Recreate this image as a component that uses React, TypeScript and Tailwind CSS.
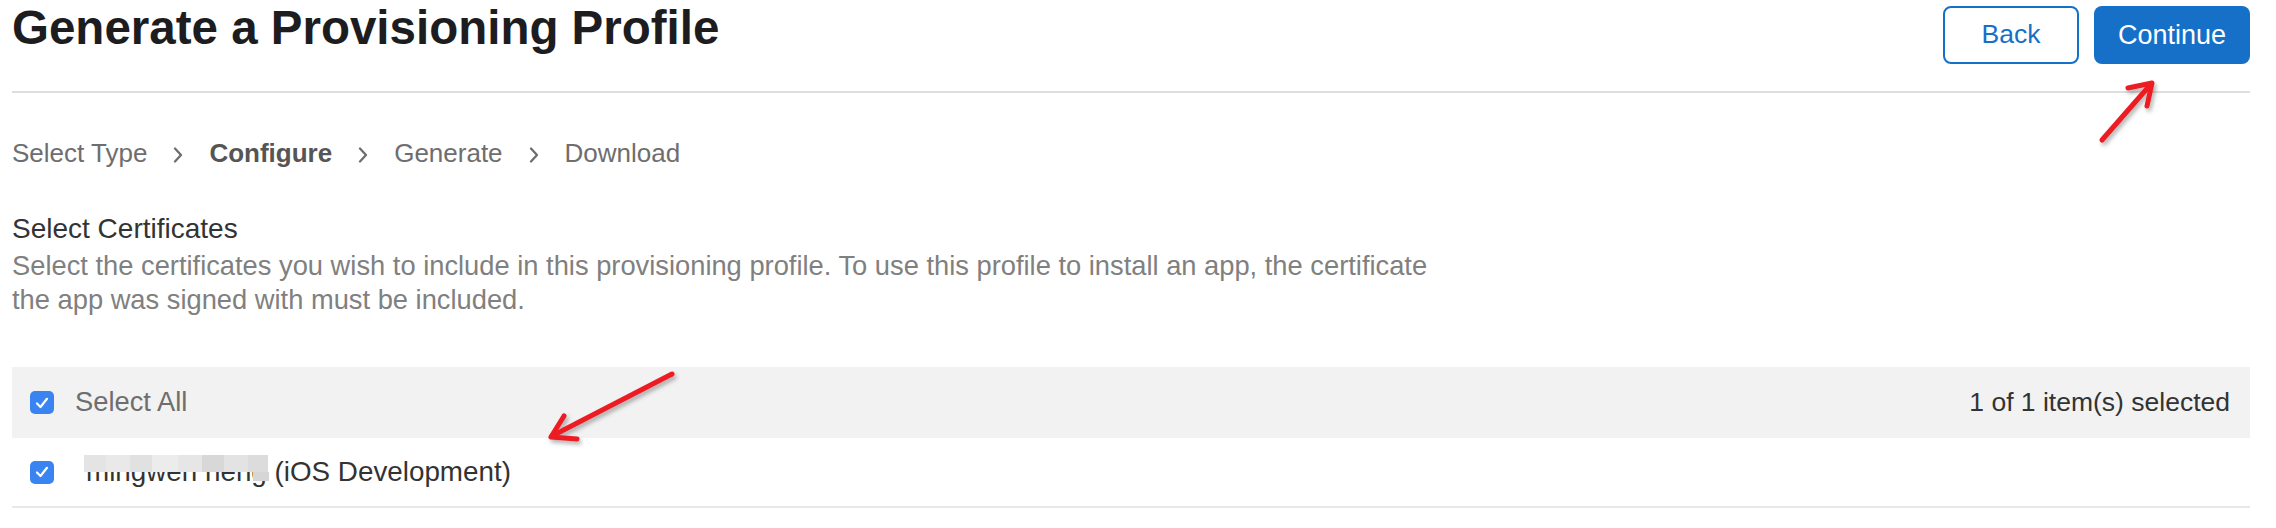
import React from "react";

// 選択済みチェックボックス
function Check() {
  return (
    <span className="flex h-[23px] w-[24px] shrink-0 items-center justify-center rounded-[5px] bg-[#3a84f2]">
      <svg width="14" height="12" viewBox="0 0 14 12" fill="none">
        <path d="M2 6.5 L5.5 10 L12 1.8" stroke="#fff" strokeWidth="2.2" strokeLinecap="round" strokeLinejoin="round" />
      </svg>
    </span>
  );
}

function Chevron() {
  return (
    <svg width="10" height="16" viewBox="0 0 10 16" fill="none" className="mx-[26px] mt-[4px]">
      <path d="M2 1.5 L8 8 L2 14.5" stroke="#6e6e6e" strokeWidth="2.3" strokeLinecap="round" strokeLinejoin="round" />
    </svg>
  );
}

const steps = [
  { label: "Select Type", active: false },
  { label: "Configure", active: true },
  { label: "Generate", active: false },
  { label: "Download", active: false },
];

// ぼかした名前のブロック
const blurBlocks = [
  { w: 22, c: "bg-[#e4e4e4]" },
  { w: 24, c: "bg-[#e9e9e9]" },
  { w: 22, c: "bg-[#e1e1e1]" },
  { w: 26, c: "bg-[#ececec]" },
  { w: 24, c: "bg-[#e6e6e6]" },
  { w: 22, c: "bg-[#d8d8d8]" },
  { w: 24, c: "bg-[#e3e3e3]" },
  { w: 20, c: "bg-[#dcdcdc]" },
];

export default function App() {
  return (
    <div className="relative h-[528px] w-[2276px] overflow-hidden bg-white font-['Liberation_Sans',Arial,sans-serif]">
      <div className="ml-[12px] w-[2238px]">
        {/* ヘッダー */}
        <div className="flex h-[93px] items-start justify-between border-b-2 border-[#dedede]">
          <h1 className="mt-[4px] text-[47.5px] font-bold leading-[47px] text-[#1d1d1f]">
            Generate a Provisioning Profile
          </h1>
          <div className="mt-[6px] flex gap-[15px]">
            <button className="h-[58px] w-[136px] rounded-[8px] border-2 border-[#1670c8] text-[26.5px] text-[#1670c8]">
              Back
            </button>
            <button className="h-[58px] w-[156px] rounded-[8px] bg-[#1670c8] text-[27px] text-white">
              Continue
            </button>
          </div>
        </div>

        {/* ステップ */}
        <div className="mt-[44px] flex h-[32px] items-center text-[26px] leading-[32px] text-[#6e6e6e]">
          {steps.map((s, i) => (
            <React.Fragment key={s.label}>
              {i > 0 && <Chevron />}
              <span className={s.active ? "font-bold text-[#555]" : ""}>{s.label}</span>
            </React.Fragment>
          ))}
        </div>

        {/* 説明 */}
        <div className="mt-[43px]">
          <h2 className="text-[28px] leading-[34px] text-[#333]">Select Certificates</h2>
          <p className="mt-[3px] max-w-[1445px] text-[27.3px] leading-[34px] text-[#808080]">
            Select the certificates you wish to include in this provisioning profile. To use this profile to install an app, the certificate the app was signed with must be included.
          </p>
        </div>

        {/* リスト */}
        <div className="mt-[50px]">
          <div className="flex h-[71px] items-center justify-between bg-[#f2f2f2] pl-[18px] pr-[20px]">
            <div className="flex items-center gap-[21px]">
              <Check />
              <span className="text-[27.3px] text-[#6e6e6e]">Select All</span>
            </div>
            <span className="text-[26.5px] text-[#333]">1 of 1 item(s) selected</span>
          </div>
          <div className="flex h-[70px] items-center border-b-2 border-[#e8e8e8] pl-[18px]">
            <Check />
            <span className="ml-[32px] text-[27.8px] text-[#333]">
              <span className="relative inline-block">
                mingwen heng
                <span className="absolute left-[-2px] top-[4px] flex h-[17px]">
                  {blurBlocks.map((b, i) => (
                    <span key={i} className={`h-full ${b.c}`} style={{ width: b.w }} />
                  ))}
                </span>
                <span className="absolute right-[-2px] top-[21px] h-[9px] w-[16px] bg-[#d6d6d6]" />
              </span>{" "}
              (iOS Development)
            </span>
          </div>
        </div>
      </div>

      {/* 赤い矢印（注釈） */}
      <svg
        className="pointer-events-none absolute left-0 top-0"
        width="2276"
        height="528"
        viewBox="0 0 2276 528"
        fill="none"
      >
        <defs>
          <filter id="sh" x="-20%" y="-20%" width="140%" height="140%">
            <feDropShadow dx="2" dy="3" stdDeviation="2" floodColor="#000" floodOpacity="0.3" />
          </filter>
        </defs>
        <g stroke="#ec1c24" strokeWidth="5" strokeLinecap="round" strokeLinejoin="round" filter="url(#sh)">
          <path d="M2102 140 L2151 84" />
          <path d="M2128 88 L2152 83 L2147 106" />
          <path d="M672 374 L552 436" />
          <path d="M564 416 L551 437 L577 439" />
        </g>
      </svg>
    </div>
  );
}
